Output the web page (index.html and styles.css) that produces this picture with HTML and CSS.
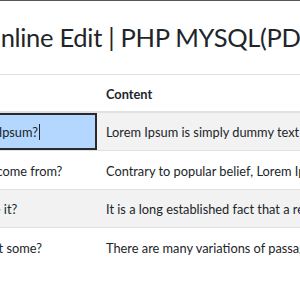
FILE: index.html
```html
<!DOCTYPE html>
<html>
<head>
<meta charset="utf-8">
<link rel="stylesheet" href="styles.css">
</head>
<body>
<div class="page">
  <h2 class="title">Inline Edit | PHP MYSQL(PDO) with jQuery</h2>
  <table class="table">
    <thead>
      <tr><th class="col-title">Title</th><th>Content</th></tr>
    </thead>
    <tbody>
      <tr class="odd"><td class="editing">What is Lorem Ipsum?<span class="caret"></span></td><td>Lorem Ipsum is simply dummy text of the printing</td></tr>
      <tr><td>Where does it come from?</td><td>Contrary to popular belief, Lorem Ipsum is not</td></tr>
      <tr class="odd"><td>Why do we use it?</td><td>It is a long established fact that a reader will</td></tr>
      <tr><td>Where can I get some?</td><td>There are many variations of passages of Lorem</td></tr>
    </tbody>
  </table>
</div>
</body>
</html>
```
FILE: styles.css
```css
html, body {
  margin: 0;
  padding: 0;
  background: #fff;
  overflow: hidden;
}
body {
  border-top: 1px solid #555;
  font-family: Lato, "Open Sans", sans-serif;
  color: #212529;
}
.page {
  margin-left: -95px;
  width: 900px;
}
.title {
  margin: 20px 0 0 89px;
  font-size: 25.5px;
  letter-spacing: -0.3px;
  font-weight: 400;
  line-height: 32px;
  white-space: nowrap;
  color: #212529;
}
.table {
  margin-top: 21px;
  border-collapse: collapse;
  font-size: 12.8px;
  line-height: 21px;
}
.table th, .table td {
  text-align: left;
  padding: 9.5px 9px 7px;
  border-top: 1px solid #dee2e6;
  white-space: nowrap;
  vertical-align: top;
}
.table th {
  font-weight: 700;
  padding-top: 9px;
  padding-bottom: 5.5px;
  border-bottom: 2px solid #dee2e6;
}
.col-title {
  width: 174px;
}
.odd td {
  background: #f2f2f2;
}
.odd td.editing {
  background: #b3d7ff;
  box-shadow: inset 0 0 0 2px #2a2a2a;
}
.caret {
  display: inline-block;
  width: 1px;
  height: 16px;
  background: #222;
  vertical-align: -3px;
  margin-left: 1px;
}
```
